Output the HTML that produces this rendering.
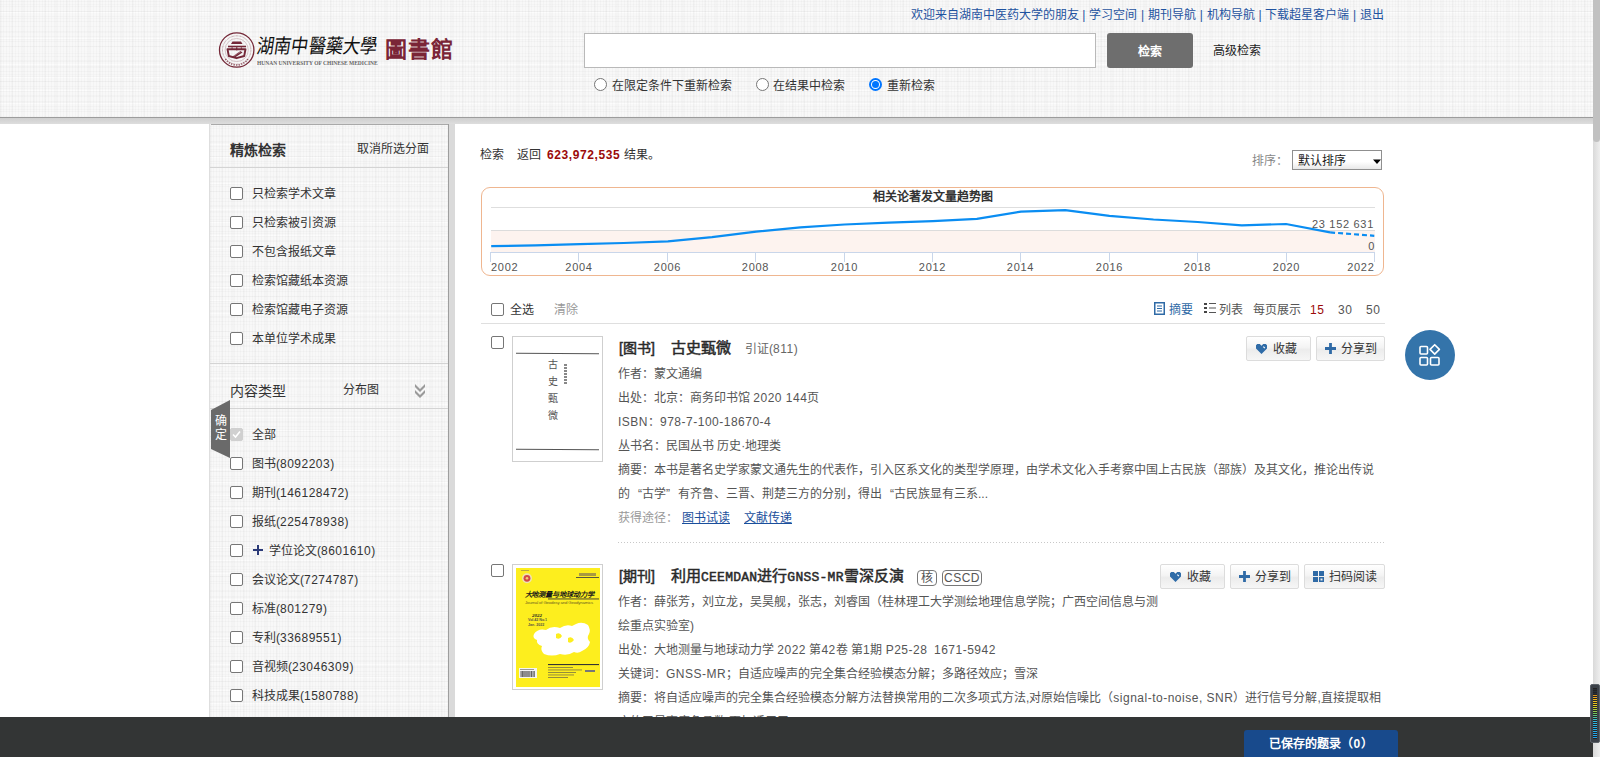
<!DOCTYPE html>
<html lang="zh-CN">
<head>
<meta charset="utf-8">
<style>
*{box-sizing:border-box}
html,body{margin:0;padding:0}
body{width:1600px;height:757px;overflow:hidden;position:relative;background:#fff;font-family:"Liberation Sans",sans-serif;color:#333;font-size:12px;line-height:20px}
.a{position:absolute;white-space:nowrap}
.tex{background-color:#f8f8f8;background-image:repeating-linear-gradient(0deg,rgba(0,0,0,0.02) 0 1px,transparent 1px 5px),repeating-linear-gradient(90deg,rgba(0,0,0,0.018) 0 1px,transparent 1px 3px),repeating-linear-gradient(0deg,rgba(0,0,0,0.015) 0 1px,transparent 1px 7px),repeating-linear-gradient(90deg,rgba(0,0,0,0.015) 0 2px,transparent 2px 11px),repeating-linear-gradient(0deg,rgba(255,255,255,0.6) 0 1px,transparent 1px 13px)}
.radio{position:absolute;width:13px;height:13px;border:1px solid #767676;border-radius:50%;background:#fff}
.radio.on{border:2px solid #0075ff}
.radio.on:after{content:"";position:absolute;left:1px;top:1px;width:7px;height:7px;border-radius:50%;background:#0075ff}
.cb{position:absolute;width:13px;height:13px;border:1px solid #767676;border-radius:2px;background:#fff}
.btn{position:absolute;height:25px;border:1px solid #dcdcdc;border-radius:2px;background:linear-gradient(#fff 0%,#f4f4f4 45%,#ececec 55%,#f6f6f6 100%);color:#333;line-height:24px;font-size:12px;white-space:nowrap}
.lnk{color:#1a4f9c;text-decoration:underline}
.g{color:#666}
.n{letter-spacing:0.5px}
</style>
</head>
<body>
<!-- header -->
<div class="a tex" style="left:0;top:0;width:1593px;height:117px"></div>
<div class="a" style="left:0;top:117px;width:1593px;height:1px;background:#9c9c9c"></div>
<div class="a" style="left:0;top:118px;width:1593px;height:6px;background:linear-gradient(#cfcfcf,#dddddd)"></div>

<!-- logo -->
<svg class="a" style="left:218px;top:31px" width="38" height="38" viewBox="0 0 38 38">
<circle cx="18.7" cy="19" r="17.2" fill="none" stroke="#742838" stroke-width="1.3"/>
<circle cx="18.7" cy="19" r="14.2" fill="none" stroke="#742838" stroke-width="1" stroke-dasharray="0.8,0.6" opacity="0.45"/>
<circle cx="18.7" cy="19" r="11.6" fill="none" stroke="#742838" stroke-width="0.4" opacity="0.6"/>
<path d="M7.5 28 A13.5 13.5 0 0 0 30 28" fill="none" stroke="#742838" stroke-width="1.6" stroke-dasharray="1.2,1.3" opacity="0.75"/>
<path d="M13 13 L14.5 10.5 L23 10.5 L24.5 13 Z" fill="#742838"/>
<rect x="10" y="14.7" width="18" height="1.6" fill="#742838"/>
<rect x="13.5" y="16.3" width="1.2" height="2.5" fill="#742838" opacity="0.8"/><rect x="22.8" y="16.3" width="1.2" height="2.5" fill="#742838" opacity="0.8"/>
<rect x="18" y="16.3" width="1.4" height="3" fill="#742838"/>
<path d="M9.5 18.2 L27.5 18.2 L26.2 25 L18.5 27.2 L10.8 25 Z" fill="none" stroke="#742838" stroke-width="1.9" stroke-linejoin="round"/>
<path d="M14.5 25.5 L22.5 20 L24.5 21.5 L17 26.5 Z" fill="#742838"/>
<path d="M16 25 L22.8 20.8" stroke="#fff" stroke-width="0.5" stroke-dasharray="0.8,0.7"/>
</svg>
<div class="a" style="left:257px;top:34px;font-weight:normal;font-size:20px;line-height:24px;color:#111;transform-origin:0 50%;transform:scaleX(0.86) skewX(-10deg);letter-spacing:0px">湖南中醫藥大學</div>
<div class="a" style="left:257px;top:60px;font-family:'Liberation Serif',serif;font-weight:bold;font-size:6px;line-height:6px;color:#666;letter-spacing:0px;transform-origin:0 0;transform:scaleX(0.915)">HUNAN UNIVERSITY OF CHINESE MEDICINE</div>
<div class="a" style="left:385px;top:37px;font-weight:bold;font-size:22px;line-height:26px;color:#7a2536;letter-spacing:1px">圖書館</div>

<div class="a" style="left:0;width:1384px;text-align:right;top:5px;color:#1f53a0;word-spacing:0.45px">欢迎来自湖南中医药大学的朋友 | 学习空间 | 期刊导航 | 机构导航 | 下载超星客户端 | 退出</div>
<div class="a" style="left:584px;top:33px;width:512px;height:35px;background:#fff;border:1px solid #b9b9b9"></div>
<div class="a" style="left:1107px;top:33px;width:86px;height:35px;background:#6e6e6e;border-radius:3px;color:#fff;font-weight:bold;text-align:center;line-height:39px;font-size:12px">检索</div>
<div class="a" style="left:1213px;top:41px;color:#222">高级检索</div>
<div class="radio" style="left:594px;top:78px"></div><div class="a" style="left:612px;top:76px">在限定条件下重新检索</div>
<div class="radio" style="left:756px;top:78px"></div><div class="a" style="left:773px;top:76px">在结果中检索</div>
<div class="radio on" style="left:869px;top:78px"></div><div class="a" style="left:887px;top:76px">重新检索</div>

<!-- sidebar -->
<div class="a" style="left:209px;top:124px;width:1px;height:593px;background:#dedede"></div>
<div class="a tex" style="left:210px;top:124px;width:238px;height:593px"></div>
<div class="a" style="left:211px;top:124px;width:237px;height:1px;background:#a9a9a9"></div>
<div class="a" style="left:448px;top:124px;width:1px;height:593px;background:#9e9e9e"></div>
<div class="a" style="left:449px;top:124px;width:6px;height:593px;background:#dadada"></div>

<div class="a" style="left:230px;top:140px;font-weight:bold;font-size:14px">精炼检索</div>
<div class="a" style="left:357px;top:139px">取消所选分面</div>
<div class="a" style="left:210px;top:167px;width:238px;height:1px;background:#d4d4d4"></div>
<div class="cb" style="left:230px;top:187px"></div><div class="a" style="left:252px;top:184px">只检索学术文章</div>
<div class="cb" style="left:230px;top:216px"></div><div class="a" style="left:252px;top:213px">只检索被引资源</div>
<div class="cb" style="left:230px;top:245px"></div><div class="a" style="left:252px;top:242px">不包含报纸文章</div>
<div class="cb" style="left:230px;top:274px"></div><div class="a" style="left:252px;top:271px">检索馆藏纸本资源</div>
<div class="cb" style="left:230px;top:303px"></div><div class="a" style="left:252px;top:300px">检索馆藏电子资源</div>
<div class="cb" style="left:230px;top:332px"></div><div class="a" style="left:252px;top:329px">本单位学术成果</div>
<div class="a" style="left:210px;top:363px;width:238px;height:1px;background:#d4d4d4"></div>
<div class="a" style="left:230px;top:381px;font-size:14px">内容类型</div>
<div class="a" style="left:343px;top:380px">分布图</div>
<svg class="a" style="left:414px;top:383px" width="12" height="16" viewBox="0 0 12 16"><path d="M1 1 L6 6 L11 1 L11 4 L6 9 L1 4 Z M1 7 L6 12 L11 7 L11 10 L6 15 L1 10 Z" fill="#9a9a9a"/></svg>
<div class="a" style="left:210px;top:408px;width:238px;height:1px;background:#d4d4d4"></div>
<svg class="a" style="left:211px;top:400px" width="20" height="58" viewBox="0 0 20 58"><path d="M0 10 L19 0 L19 58 L0 49 Z" fill="#6a6a6a"/></svg>
<div class="a" style="left:215px;top:414px;width:12px;color:#fff;line-height:14px;white-space:normal;font-size:12px">确定</div>

<div class="cb" style="left:230px;top:428px;border-color:#d0d0d0;background:#d0d0d0"></div>
<svg class="a" style="left:231px;top:429px" width="11" height="11" viewBox="0 0 11 11"><path d="M2 5.5 L4.5 8 L9 2.5" fill="none" stroke="#fff" stroke-width="1.6"/></svg>
<div class="a" style="left:252px;top:425px">全部</div>
<div class="cb" style="left:230px;top:457px"></div><div class="a" style="left:252px;top:454px">图书(<span class="n">8092203)</span></div>
<div class="cb" style="left:230px;top:486px"></div><div class="a" style="left:252px;top:483px">期刊(<span class="n">146128472)</span></div>
<div class="cb" style="left:230px;top:515px"></div><div class="a" style="left:252px;top:512px">报纸(<span class="n">225478938)</span></div>
<div class="cb" style="left:230px;top:544px"></div>
<svg class="a" style="left:253px;top:545px" width="10" height="10" viewBox="0 0 10 10"><path d="M0 5 H10 M5 0 V10" stroke="#2b3a78" stroke-width="2"/></svg>
<div class="a" style="left:269px;top:541px">学位论文(<span class="n">8601610)</span></div>
<div class="cb" style="left:230px;top:573px"></div><div class="a" style="left:252px;top:570px">会议论文(<span class="n">7274787)</span></div>
<div class="cb" style="left:230px;top:602px"></div><div class="a" style="left:252px;top:599px">标准(<span class="n">801279)</span></div>
<div class="cb" style="left:230px;top:631px"></div><div class="a" style="left:252px;top:628px">专利(<span class="n">33689551)</span></div>
<div class="cb" style="left:230px;top:660px"></div><div class="a" style="left:252px;top:657px">音视频(<span class="n">23046309)</span></div>
<div class="cb" style="left:230px;top:689px"></div><div class="a" style="left:252px;top:686px">科技成果(<span class="n">1580788)</span></div>

<!-- MAIN -->
<div class="a" style="left:480px;top:145px">检索</div><div class="a" style="left:517px;top:145px">返回</div><div class="a" style="left:547px;top:145px;color:#9b0a0a;font-weight:bold;letter-spacing:0.6px">623,972,535</div><div class="a" style="left:624px;top:145px">结果。</div>
<div class="a" style="left:1252px;top:151px;color:#888">排序：</div>
<div class="a" style="left:1292px;top:150px;width:90px;height:20px;border:1px solid #8f8f8f;background:linear-gradient(#fff 60%,#e8e8e8);line-height:21px;padding-left:5px;color:#1a1a1a">默认排序</div>
<svg class="a" style="left:1372px;top:159px" width="10" height="6" viewBox="0 0 10 6"><path d="M1 0.5 L9 0.5 L5 5 Z" fill="#000"/></svg>

<!-- chart -->
<div class="a" style="left:481px;top:187px;width:903px;height:89px;border:1px solid #efb690;border-radius:9px"></div>
<div class="a" style="left:873px;top:187px;font-weight:bold;color:#333">相关论著发文量趋势图</div>
<svg class="a" style="left:0;top:0" width="1600" height="300" viewBox="0 0 1600 300">
<rect x="491" y="230" width="884" height="22" fill="#fdf3ef"/>
<line x1="491" y1="207.5" x2="1375" y2="207.5" stroke="#dedede" stroke-width="1"/>
<line x1="491" y1="230.5" x2="1375" y2="230.5" stroke="#dcdcdc" stroke-width="1"/>
<line x1="491" y1="252.5" x2="1375" y2="252.5" stroke="#c9d6ea" stroke-width="1"/>
<g stroke="#c9d6ea" stroke-width="1">
<line x1="490.5" y1="252" x2="490.5" y2="262"/><line x1="578.5" y1="252" x2="578.5" y2="262"/><line x1="667.5" y1="252" x2="667.5" y2="262"/><line x1="755.5" y1="252" x2="755.5" y2="262"/><line x1="844.5" y1="252" x2="844.5" y2="262"/><line x1="932.5" y1="252" x2="932.5" y2="262"/><line x1="1020.5" y1="252" x2="1020.5" y2="262"/><line x1="1109.5" y1="252" x2="1109.5" y2="262"/><line x1="1197.5" y1="252" x2="1197.5" y2="262"/><line x1="1286.5" y1="252" x2="1286.5" y2="262"/><line x1="1374.5" y1="252" x2="1374.5" y2="262"/>
</g>
<polyline points="491.2,246.2 535.4,245.3 579.5,244.2 623.7,243 667.9,241.4 712,237.2 756.2,231.6 800.4,227.3 844.5,224.5 888.7,222.6 932.8,221.2 976.9,218.9 1021,211.6 1065.2,210.2 1109.4,215.8 1153.5,219.5 1197.7,222 1241.8,225.4 1286,224 1330.1,232.4" fill="none" stroke="#0a8df2" stroke-width="2.2" stroke-linejoin="round"/>
<line x1="1330.1" y1="232.4" x2="1374.3" y2="235.8" stroke="#0a8df2" stroke-width="2.2" stroke-dasharray="5,3"/>
<g font-family="Liberation Sans" font-size="11" fill="#555" letter-spacing="0.7">
<text x="491" y="271">2002</text><text x="579" y="271" text-anchor="middle">2004</text><text x="667.5" y="271" text-anchor="middle">2006</text><text x="755.5" y="271" text-anchor="middle">2008</text><text x="844.5" y="271" text-anchor="middle">2010</text><text x="932.5" y="271" text-anchor="middle">2012</text><text x="1020.5" y="271" text-anchor="middle">2014</text><text x="1109.5" y="271" text-anchor="middle">2016</text><text x="1197.5" y="271" text-anchor="middle">2018</text><text x="1286.5" y="271" text-anchor="middle">2020</text><text x="1374.5" y="271" text-anchor="end">2022</text>
<text x="1374" y="228" text-anchor="end">23 152 631</text><text x="1375" y="250" text-anchor="end">0</text>
</g>
</svg>

<!-- toolbar -->
<div class="cb" style="left:491px;top:303px"></div>
<div class="a" style="left:510px;top:300px">全选</div>
<div class="a" style="left:554px;top:300px;color:#999">清除</div>
<svg class="a" style="left:1154px;top:302px" width="11" height="13" viewBox="0 0 11 13"><rect x="0.75" y="0.75" width="9.5" height="11.5" fill="none" stroke="#2f6aa6" stroke-width="1.5"/><path d="M3 4 H8 M3 6.5 H8 M3 9 H8" stroke="#2f6aa6" stroke-width="1"/></svg>
<div class="a" style="left:1169px;top:300px;color:#2f6aa6">摘要</div>
<svg class="a" style="left:1204px;top:302px" width="12" height="12" viewBox="0 0 12 12"><path d="M0 1 H3 V3 H0 Z M0 5 H3 V7 H0 Z M0 9 H3 V11 H0 Z" fill="#444"/><path d="M5 1.5 H12 M5 6 H12 M5 10.5 H12" stroke="#555" stroke-width="1"/></svg>
<div class="a" style="left:1219px;top:300px;color:#555">列表</div>
<div class="a" style="left:1253px;top:300px;color:#555">每页展示</div>
<div class="a" style="left:1310px;top:300px;color:#9b0a0a"><span class="n">15</span></div>
<div class="a" style="left:1338px;top:300px;color:#555"><span class="n">30</span></div>
<div class="a" style="left:1366px;top:300px;color:#555"><span class="n">50</span></div>
<div class="a" style="left:481px;top:323px;width:904px;height:1px;background:#dfdfdf"></div>

<!-- result 1 -->
<div class="cb" style="left:491px;top:336px"></div>
<div class="a" style="left:512px;top:336px;width:91px;height:126px;border:1px solid #cfcfcf;background:#fff"></div>
<div class="a" style="left:516px;top:352.5px;width:83px;height:1px;background:#555;transform:rotate(0.5deg)"></div>
<div class="a" style="left:516px;top:448.5px;width:83px;height:1px;background:#555;transform:rotate(0.4deg)"></div>
<div class="a" style="left:548px;top:356px;width:12px;font-family:'Liberation Serif',serif;font-size:10px;line-height:17px;white-space:normal;color:#555">古史甄微</div>
<div class="a" style="left:564px;top:364px;width:3px;height:20px;background:repeating-linear-gradient(#888 0 2px,#fff 2px 3px)"></div>

<div class="a" style="left:619px;top:338px;font-size:14px;color:#2a2a2a;line-height:20px;-webkit-text-stroke:0.5px #2a2a2a">[图书]</div><div class="a" style="left:671px;top:338px;font-size:15px;color:#2a2a2a;line-height:20px;-webkit-text-stroke:0.5px #2a2a2a">古史甄微</div>
<div class="a" style="left:745px;top:339px;color:#666">引证(<span class="n">811)</span></div>
<div class="btn" style="left:1246px;top:336px;width:65px;padding-left:26px">收藏</div>
<svg class="a" style="left:1256px;top:344px" width="11" height="10" viewBox="0 0 11 10"><path d="M1.2 0 L3.8 0 L5.5 1.8 L7.2 0 L9.8 0 L11 1.2 L11 4.6 L5.5 10 L0 4.6 L0 1.2 Z" fill="#2f6ca8"/><path d="M7.3 2.6 L8.9 4.1" stroke="#fff" stroke-width="1.1"/></svg>
<div class="btn" style="left:1316px;top:336px;width:69px;padding-left:24px">分享到</div>
<svg class="a" style="left:1325px;top:343px" width="11" height="11" viewBox="0 0 11 11"><path d="M5.5 0 V11 M0 5.5 H11" stroke="#2f6aa6" stroke-width="2.8"/></svg>

<div class="a" style="left:618px;top:364px;color:#555">作者：蒙文通编</div>
<div class="a" style="left:618px;top:388px;color:#555">出处：北京：商务印书馆 <span class="n">2020 144</span>页</div>
<div class="a" style="left:618px;top:412px;color:#555"><span class="n">ISBN</span>：<span class="n">978-7-100-18670-4</span></div>
<div class="a" style="left:618px;top:436px;color:#555">丛书名：民国丛书 历史·地理类</div>
<div class="a" style="left:618px;top:460px;color:#555">摘要：本书是著名史学家蒙文通先生的代表作，引入区系文化的类型学原理，由学术文化入手考察中国上古民族（部族）及其文化，推论出传说</div>
<div class="a" style="left:618px;top:484px;color:#555">的<span style="display:inline-block;width:12px;text-align:right">“</span>古学<span style="display:inline-block;width:12px;text-align:left">”</span>有齐鲁、三晋、荆楚三方的分别，得出<span style="display:inline-block;width:12px;text-align:right">“</span>古民族显有三系...</div>
<div class="a" style="left:618px;top:508px;color:#999">获得途径：</div>
<div class="a lnk" style="left:682px;top:508px">图书试读</div>
<div class="a lnk" style="left:744px;top:508px">文献传递</div>
<div class="a" style="left:618px;top:542px;width:766px;height:1px;background:repeating-linear-gradient(90deg,#c8c8c8 0 1px,transparent 1px 3px)"></div>

<!-- result 2 -->
<div class="cb" style="left:491px;top:564px"></div>
<div class="a" style="left:512px;top:564px;width:91px;height:126px;border:1px solid #cfcfcf;background:#fff"></div>
<svg class="a" style="left:516px;top:568px" width="84" height="119" viewBox="0 0 84 119">
<rect width="84" height="119" fill="#fdee1e"/>
<circle cx="11" cy="10.3" r="5" fill="#efe2b0"/><circle cx="11" cy="10.3" r="3.4" fill="#d24848"/><circle cx="11" cy="10.3" r="1.3" fill="#f3d070"/>
<rect x="5" y="2" width="8" height="1" fill="#b8a840"/>
<rect x="63" y="5" width="17" height="3" fill="#a89a40"/><rect x="60" y="9" width="23" height="0.9" fill="#444"/>
<text x="8.5" y="28.7" font-family="Liberation Serif" font-weight="bold" font-style="italic" font-size="7.2" fill="#1a1a1a" letter-spacing="-0.1">大地测量与地球动力学</text>
<rect x="32" y="30.5" width="51" height="0.9" fill="#333"/>
<text x="9" y="36.3" font-family="Liberation Sans" font-size="4.3" fill="#6a6020" letter-spacing="-0.15">Journal of Geodesy and Geodynamics</text>
<text x="16" y="48.8" font-family="Liberation Serif" font-weight="bold" font-style="italic" font-size="5" fill="#222">2022</text>
<text x="12" y="53" font-family="Liberation Sans" font-weight="bold" font-size="3.6" fill="#554">Vol.42 No.1</text>
<text x="12" y="57.5" font-family="Liberation Sans" font-weight="bold" font-size="3.6" fill="#554">Jan. 2022</text>
<path d="M18 66 Q22 60 30 62 Q36 57 44 60 Q50 56 56 58 L60 56 Q66 53 72 57 Q75 62 73 66 Q70 70 74 74 Q73 80 66 83 Q62 86 58 84 Q52 88 44 86 Q36 89 28 86 Q24 82 26 78 Q20 76 21 72 Q16 70 18 66 Z" fill="#fff"/>
<path d="M40 66 Q44 64 46 68 Q44 72 40 70 Z M52 70 Q56 68 58 72 Q55 76 52 74 Z" fill="#fdee1e"/>
<rect x="32" y="96" width="51" height="1.1" fill="#333"/>
<g fill="#8a8040"><rect x="32" y="99" width="25" height="0.9"/><rect x="32" y="101.5" width="34" height="0.9"/><rect x="32" y="104" width="28" height="0.9"/><rect x="32" y="106.5" width="26" height="0.9"/><rect x="32" y="109" width="20" height="0.9"/></g>
<rect x="69" y="102" width="10" height="2" fill="#777"/>
<rect x="3" y="100" width="18" height="10" fill="#f4f4f4"/>
<rect x="4" y="101" width="14" height="1" fill="#999"/>
<path d="M5 103 V109 M6.3 103 V109 M7.2 103 V109 M8.8 103 V109 M10 103 V109 M11.2 103 V109 M12.8 103 V109 M14 103 V109 M15.5 103 V109 M17 103 V109 M18.3 103 V109" stroke="#222" stroke-width="0.7"/>
</svg>

<div class="a" style="left:619px;top:566px;font-size:14px;color:#2a2a2a;line-height:20px;-webkit-text-stroke:0.5px #2a2a2a">[期刊]</div><div class="a" style="left:671px;top:566px;font-size:15px;color:#2a2a2a;line-height:20px;-webkit-text-stroke:0.5px #2a2a2a">利用<span style="font-family:'Liberation Mono',monospace;font-size:13px;letter-spacing:0.25px">CEEMDAN</span>进行<span style="font-family:'Liberation Mono',monospace;font-size:13px;letter-spacing:0.25px">GNSS-MR</span>雪深反演</div>
<div class="a" style="left:917px;top:570px;width:20px;height:16px;border:1px solid #777;border-radius:4px;line-height:14px;text-align:center;color:#555">核</div>
<div class="a" style="left:942px;top:570px;width:40px;height:16px;border:1px solid #777;border-radius:4px;line-height:14px;text-align:center;color:#555"><span class="n">CSCD</span></div>
<div class="btn" style="left:1160px;top:564px;width:65px;padding-left:26px">收藏</div>
<svg class="a" style="left:1170px;top:572px" width="11" height="10" viewBox="0 0 11 10"><path d="M1.2 0 L3.8 0 L5.5 1.8 L7.2 0 L9.8 0 L11 1.2 L11 4.6 L5.5 10 L0 4.6 L0 1.2 Z" fill="#2f6ca8"/><path d="M7.3 2.6 L8.9 4.1" stroke="#fff" stroke-width="1.1"/></svg>
<div class="btn" style="left:1230px;top:564px;width:69px;padding-left:24px">分享到</div>
<svg class="a" style="left:1239px;top:571px" width="11" height="11" viewBox="0 0 11 11"><path d="M5.5 0 V11 M0 5.5 H11" stroke="#2f6aa6" stroke-width="2.8"/></svg>
<div class="btn" style="left:1304px;top:564px;width:81px;padding-left:24px">扫码阅读</div>
<svg class="a" style="left:1313px;top:571px" width="11" height="11" viewBox="0 0 11 11"><rect x="0" y="0" width="5" height="5" fill="#2f6aa6"/><rect x="6" y="0" width="5" height="5" fill="#2f6aa6"/><rect x="0" y="6" width="5" height="5" fill="#2f6aa6"/><rect x="6.75" y="6.75" width="3.5" height="3.5" fill="none" stroke="#2f6aa6" stroke-width="1.5"/></svg>

<div class="a" style="left:618px;top:592px;color:#555">作者：薛张芳，刘立龙，吴昊舰，张志，刘睿国（桂林理工大学测绘地理信息学院；广西空间信息与测</div>
<div class="a" style="left:618px;top:616px;color:#555">绘重点实验室)</div>
<div class="a" style="left:618px;top:640px;color:#555">出处：大地测量与地球动力学 <span class="n">2022</span> 第<span class="n">42</span>卷 第<span class="n">1</span>期 <span class="n">P25-28</span>&nbsp;&nbsp;<span class="n">1671-5942</span></div>
<div class="a" style="left:618px;top:664px;color:#555">关键词：<span class="n">GNSS-MR</span>；自适应噪声的完全集合经验模态分解；多路径效应；雪深</div>
<div class="a" style="left:618px;top:688px;color:#555">摘要：将自适应噪声的完全集合经验模态分解方法替换常用的二次多项式方法,对原始信噪比（<span class="n">signal-to-noise, SNR</span>）进行信号分解,直接提取相</div>
<div class="a" style="left:618px;top:712px;color:#555">应的卫星高度角函数,更加适用于<span class="n">GNSS</span></div>

<!-- fab -->
<svg class="a" style="left:1405px;top:330px" width="50" height="50" viewBox="0 0 50 50">
<circle cx="25" cy="25" r="25" fill="#3474aa"/>
<g fill="none" stroke="#fff" stroke-width="1.6">
<rect x="15" y="16.5" width="7.5" height="7.5" rx="1"/>
<rect x="15" y="27.5" width="7.5" height="7.5" rx="1"/>
<rect x="25.5" y="27.5" width="8.5" height="7.5" rx="1"/>
<path d="M29.7 14.7 L34.4 19.4 L29.7 24.1 L25 19.4 Z" stroke-linejoin="round"/>
</g>
</svg>

<!-- bottom bar -->
<div class="a" style="left:0;top:717px;width:1593px;height:40px;background:#333535"></div>
<div class="a" style="left:1244px;top:730px;width:154px;height:27px;background:#184a8c;border-radius:3px 3px 0 0;color:#fff;text-align:center;line-height:29px;font-weight:bold">已保存的题录（<span class="n">0</span>）</div>

<!-- scrollbar -->
<div class="a" style="left:1593px;top:0;width:7px;height:757px;background:linear-gradient(90deg,#d9d9d9,#eeeeee)"></div>
<div class="a" style="left:1593px;top:0;width:7px;height:142px;background:#c1c1c1;border-radius:0 0 4px 4px"></div>
<div class="a" style="left:1590px;top:684px;width:10px;height:59px;background:#3b4048;border:1px solid #5b6168;border-radius:2px"></div>
<div class="a" style="left:1593px;top:688px;width:4px;height:51px;background:repeating-linear-gradient(#222 0 1px,transparent 1px 2px),linear-gradient(#2a2e36 0%,#2a2e36 12%,#f0a020 15%,#e8d020 35%,#70c860 50%,#30b8e0 65%,#20a0f0 100%)"></div>
</body>
</html>
